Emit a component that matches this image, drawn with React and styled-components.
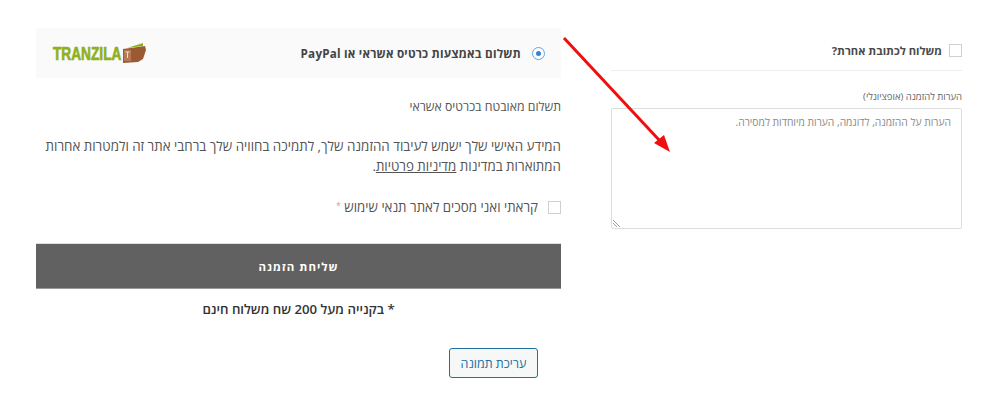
import React from "react";
import styled, { createGlobalStyle } from "styled-components";

const Global = createGlobalStyle`
  html, body { margin: 0; padding: 0; background: #fff; }
  body { width: 1008px; height: 419px; overflow: hidden; font-family: "Open Sans", "Noto Sans", "DejaVu Sans", sans-serif; color: #4a4a4a; }
  * { box-sizing: border-box; }
`;

const Page = styled.div`
  position: relative;
  width: 1008px;
  height: 419px;
  display: flex;
  align-items: flex-start;
  padding: 28px 46px 0 36px;
  gap: 50px;
`;

const LeftColumn = styled.div`
  width: 525px;
  flex: none;
  display: flex;
  flex-direction: column;
`;

const RightColumn = styled.div`
  flex: 1;
  display: flex;
  flex-direction: column;
  direction: rtl;
  padding-top: 12px;
`;

const PaymentHeader = styled.div`
  height: 50px;
  background: #fafafa;
  display: flex;
  align-items: center;
  justify-content: space-between;
  padding: 0 16px 0 17px;
`;

const PaymentLabel = styled.label`
  display: flex;
  align-items: center;
  gap: 11px;
  direction: rtl;
  font-size: 11.7px;
  font-weight: 700;
  color: #444;
  letter-spacing: 0.2px;
`;

const Radio = styled.span`
  width: 13px;
  height: 13px;
  border-radius: 50%;
  border: 1px solid #5aa7e6;
  background: #fff;
  display: flex;
  align-items: center;
  justify-content: center;
  &::after {
    content: "";
    width: 5px;
    height: 5px;
    border-radius: 50%;
    background: #2b86d6;
  }
`;

const Logo = styled.div`
  display: flex;
  align-items: center;
  gap: 0;
  margin-top: 2px;
`;

const LogoText = styled.span`
  display: inline-block;
  direction: ltr;
  font-family: "Liberation Sans", sans-serif;
  font-weight: 700;
  font-size: 19px;
  line-height: 20px;
  color: #8fb01c;
  width: 68px;
  transform: scaleX(0.72);
  transform-origin: left center;
  white-space: nowrap;
  -webkit-text-stroke: 0.7px #8fb01c;
`;

const Paragraph = styled.p`
  direction: rtl;
  margin: 0;
  font-size: ${(p) => p.$size}px;
  line-height: 20px;
  color: #555;
  margin-top: ${(p) => p.$top}px;
`;

const PolicyLink = styled.a`
  color: #555;
  text-decoration: underline;
`;

const TermsRow = styled.label`
  direction: rtl;
  display: flex;
  align-items: center;
  gap: 10px;
  margin-top: 21px;
  font-size: 13.3px;
  color: #555;
  height: 20px;
`;

const CheckBox = styled.span`
  width: 13px;
  height: 13px;
  flex: none;
  border: 1px solid #cfcfcf;
  background: #fff;
`;

const Required = styled.span`
  color: #d99;
  font-size: 9px;
  margin-right: 0;
  vertical-align: 3px;
`;

const SubmitBar = styled.button`
  display: block;
  width: 100%;
  height: 46px;
  margin-top: 26px;
  background: #616161;
  border: 0;
  border-top: 1px solid #ddd;
  border-bottom: 1px solid #999;
  color: #fff;
  font-family: inherit;
  font-size: 11.5px;
  font-weight: 700;
  letter-spacing: 1px;
  direction: rtl;
`;

const Notice = styled.div`
  direction: rtl;
  text-align: center;
  margin-top: 10px;
  font-size: 13.2px;
  line-height: 20px;
  font-weight: 600;
  color: #333;
`;

const EditRow = styled.div`
  display: flex;
  justify-content: flex-end;
  padding-right: 23px;
  margin-top: 29px;
`;

const EditButton = styled.button`
  width: 89px;
  height: 30px;
  background: #f6f7f7;
  border: 1px solid #1f6f9f;
  border-radius: 3px;
  color: #2271a1;
  font-family: inherit;
  font-size: 12.5px;
  direction: rtl;
  padding: 0;
`;

const ShipRow = styled.label`
  display: flex;
  align-items: center;
  gap: 7px;
  height: 20px;
  font-size: 11.2px;
  font-weight: 700;
  color: #4a4a4a;
`;

const Divider = styled.div`
  height: 1px;
  background: #eee;
  margin-top: 10px;
`;

const NotesLabel = styled.div`
  margin-top: 19px;
  font-size: 9.5px;
  line-height: 13px;
  color: #666;
`;

const Notes = styled.div`
  position: relative;
  height: 121px;
  margin-top: 5px;
  border: 1px solid #ddd;
  border-radius: 2px;
  padding: 5px 10px;
  font-size: 10.3px;
  line-height: 16px;
  color: #8a8a8a;
`;

const ResizeGrip = styled.svg`
  position: absolute;
  left: 1px;
  bottom: 1px;
  width: 8px;
  height: 8px;
`;

const ArrowOverlay = styled.svg`
  position: absolute;
  left: 0;
  top: 0;
  width: 1008px;
  height: 419px;
  pointer-events: none;
`;

export default function App() {
  return (
    <>
      <Global />
      <Page>
        <LeftColumn>
          <PaymentHeader>
            <Logo>
              <LogoText>TRANZILA</LogoText>
              <svg width="26" height="24" viewBox="0 0 26 24">
                <path d="M6 6 L22 1 L22 4 Z" fill="#8fb01c" />
                <path d="M2 7 L24 4 L25 8 L22 17 L17 20 L2 21 Z" fill="#9c5a34" />
                <path d="M3 8 H10 V19 H3 Z" fill="#b77a55" />
                <path d="M4.5 10 H8.5 M6.5 10 V16" stroke="#eadccf" strokeWidth="1" fill="none" />
              </svg>
            </Logo>
            <PaymentLabel>
              <Radio />
              <span>תשלום באמצעות כרטיס אשראי או PayPal</span>
            </PaymentLabel>
          </PaymentHeader>
          <Paragraph $top={19} $size={12.3}>תשלום מאובטח בכרטיס אשראי</Paragraph>
          <Paragraph $top={19} $size={13.35}>
            המידע האישי שלך ישמש לעיבוד ההזמנה שלך, לתמיכה בחוויה שלך ברחבי אתר זה ולמטרות אחרות המתוארות במדינות <PolicyLink>מדיניות פרטיות</PolicyLink>.
          </Paragraph>
          <TermsRow>
            <CheckBox />
            <span>
              קראתי ואני מסכים לאתר תנאי שימוש <Required>*</Required>
            </span>
          </TermsRow>
          <SubmitBar>שליחת הזמנה</SubmitBar>
          <Notice>* בקנייה מעל 200 שח משלוח חינם</Notice>
          <EditRow>
            <EditButton>עריכת תמונה</EditButton>
          </EditRow>
        </LeftColumn>
        <RightColumn>
          <ShipRow>
            <CheckBox />
            <span>משלוח לכתובת אחרת?</span>
          </ShipRow>
          <Divider />
          <NotesLabel>הערות להזמנה (אופציונלי)</NotesLabel>
          <Notes>
            הערות על ההזמנה, לדוגמה, הערות מיוחדות למסירה.
            <ResizeGrip viewBox="0 0 8 8">
              <path d="M0 1 L7 8 M0 4 L4 8" stroke="#888" strokeWidth="0.8" />
            </ResizeGrip>
          </Notes>
        </RightColumn>
        <ArrowOverlay viewBox="0 0 1008 419">
          <line x1="564" y1="38" x2="660" y2="141" stroke="#f00f0f" strokeWidth="3" />
          <polygon points="670,152 654,143 664,135" fill="#f00f0f" />
        </ArrowOverlay>
      </Page>
    </>
  );
}
